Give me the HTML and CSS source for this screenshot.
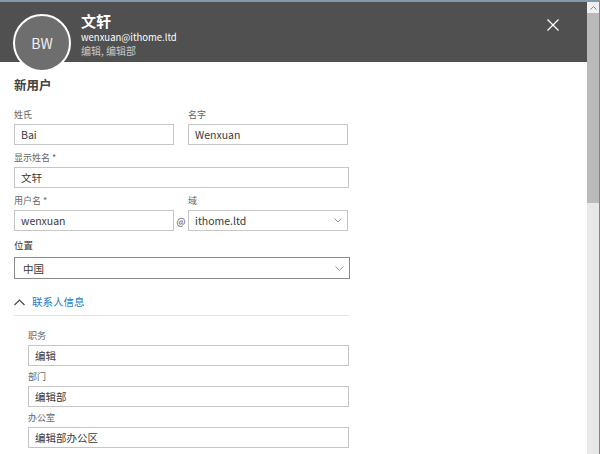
FILE: index.html
```html
<!DOCTYPE html>
<html lang="zh-CN">
<head>
<meta charset="utf-8">
<title>新用户</title>
<link rel="stylesheet" href="styles.css">
</head>
<body>
<div class="topstrip"></div>
<div class="window">
  <div class="panel">
    <header class="header">
      <div class="avatar">BW</div>
      <div class="info">
        <div class="name">文轩</div>
        <div class="email">wenxuan@ithome.ltd</div>
        <div class="sub">编辑, 编辑部</div>
      </div>
      <div class="close">
        <svg width="12" height="12" viewBox="0 0 12 12"><path d="M0.5 0.5 L11.5 11.5 M11.5 0.5 L0.5 11.5" stroke="#fff" stroke-width="1.3" fill="none"/></svg>
      </div>
    </header>
    <main class="content">
      <h2 class="title">新用户</h2>
      <div class="form">
        <div class="row">
          <div class="field half">
            <div class="label">姓氏</div>
            <div class="input">Bai</div>
          </div>
          <div class="spacer"></div>
          <div class="field half">
            <div class="label">名字</div>
            <div class="input">Wenxuan</div>
          </div>
        </div>
        <div class="field">
          <div class="label">显示姓名 *</div>
          <div class="input">文轩</div>
        </div>
        <div class="row">
          <div class="field half">
            <div class="label">用户名 *</div>
            <div class="input">wenxuan</div>
          </div>
          <div class="spacer at">@</div>
          <div class="field half">
            <div class="label">域</div>
            <div class="input select">ithome.ltd
              <svg class="chev" width="8" height="5" viewBox="0 0 8 5"><path d="M0.5 0.5 L4 4 L7.5 0.5" stroke="#888" stroke-width="0.9" fill="none"/></svg>
            </div>
          </div>
        </div>
        <div class="field loc">
          <div class="label dark">位置</div>
          <div class="input select strong">中国
            <svg class="chev" width="9" height="5" viewBox="0 0 9 5"><path d="M0.5 0.5 L4.5 4.5 L8.5 0.5" stroke="#888" stroke-width="0.9" fill="none"/></svg>
          </div>
        </div>
        <div class="section">
          <svg class="up" width="11" height="7" viewBox="0 0 11 7"><path d="M0.5 6 L5.5 1 L10.5 6" stroke="#444" stroke-width="1.1" fill="none"/></svg>
          <span class="section-title">联系人信息</span>
        </div>
        <div class="contact">
          <div class="field">
            <div class="label">职务</div>
            <div class="input">编辑</div>
          </div>
          <div class="field">
            <div class="label">部门</div>
            <div class="input">编辑部</div>
          </div>
          <div class="field">
            <div class="label">办公室</div>
            <div class="input">编辑部办公区</div>
          </div>
        </div>
      </div>
    </main>
  </div>
  <div class="scrollbar">
    <div class="sb-btn"><svg width="7" height="4" viewBox="0 0 7 4"><path d="M0.5 3.5 L3.5 0.5 L6.5 3.5" stroke="#888" stroke-width="1" fill="none"/></svg></div>
    <div class="sb-thumb"></div>
    <div class="sb-track"></div>
  </div>
</div>
</body>
</html>
```
FILE: styles.css
```css
html, body {
  margin: 0;
  padding: 0;
  background: #fff;
  overflow: hidden;
}
body {
  width: 600px;
  height: 454px;
  font-family: "Noto Sans CJK SC", "Noto Sans", sans-serif;
  color: #333;
}
.topstrip {
  height: 2px;
  background: #8497ab;
}
.window {
  display: flex;
  height: 452px;
}
.panel {
  width: 587px;
  display: flex;
  flex-direction: column;
}
.header {
  height: 60px;
  background: #505050;
  display: flex;
  align-items: flex-start;
  padding-left: 13px;
  box-sizing: border-box;
}
.avatar {
  width: 54px;
  height: 54px;
  border: 2px solid #fff;
  border-radius: 50%;
  background: #6e6e6e;
  color: #f0f0f0;
  font-size: 14px;
  line-height: 16px;
  display: flex;
  align-items: center;
  justify-content: center;
  margin-top: 12px;
  flex: none;
}
.info {
  margin-left: 10px;
  margin-top: 9px;
  color: #fff;
  flex: 1;
}
.name {
  font-size: 15px;
  font-weight: 700;
  line-height: 20px;
}
.email {
  font-size: 9.5px;
  line-height: 13px;
}
.sub {
  font-size: 10px;
  line-height: 14px;
  color: #c9c9c9;
}
.close {
  margin-top: 17px;
  margin-right: 28px;
  width: 12px;
  height: 12px;
}
.close svg { display: block; }
.content {
  padding-left: 14px;
  flex: 1;
}
.title {
  margin: 13px 0 0;
  font-size: 12.5px;
  font-weight: 700;
  line-height: 20px;
  color: #444;
}
.form {
  width: 335px;
  margin-top: 13px;
}
.row {
  display: flex;
}
.half {
  width: 160px;
}
.spacer {
  width: 14px;
}
.at {
  font-size: 9.5px;
  color: #444;
  padding-top: 21px;
  text-align: center;
  line-height: 12px;
}
.field {
  margin-bottom: 6px;
}
.label {
  font-size: 9px;
  line-height: 13px;
  color: #666;
  margin-bottom: 3px;
}
.label.dark {
  color: #333;
  font-size: 9.5px;
  line-height: 12px;
  margin-bottom: 6px;
}
.input {
  height: 21px;
  border: 1px solid #c6c6c6;
  box-sizing: border-box;
  font-size: 10.5px;
  line-height: 19px;
  padding-left: 6px;
  color: #3a3a3a;
  display: flex;
  align-items: center;
}
.select {
  justify-content: space-between;
  padding-right: 5px;
}
.strong {
  border-color: #8a8a8a;
  height: 22px;
  padding-left: 8px;
}
.loc {
  margin-top: 2px;
  width: 336px;
}
.chev { display: block; }
.section {
  margin-top: 12px;
  height: 22px;
  border-bottom: 1px solid #e3e3e3;
  display: flex;
  align-items: center;
  padding-bottom: 2px;
}
.up {
  margin-left: 0;
  margin-right: 7px;
}
.section-title {
  font-size: 10.5px;
  line-height: 14px;
  color: #1f7ac4;
}
.contact {
  padding-left: 14px;
  padding-top: 13px;
}
.contact .field {
  margin-bottom: 4px;
}
.scrollbar {
  width: 13px;
  display: flex;
  flex-direction: column;
  border-right: 1px solid #4a8fd8;
  box-sizing: border-box;
}
.sb-btn {
  height: 11px;
  background: #f0f0f0;
  display: flex;
  align-items: center;
  justify-content: center;
}
.sb-btn svg { display: block; }
.sb-thumb {
  height: 190px;
  background: #bababa;
}
.sb-track {
  flex: 1;
  background: #e8e8e8;
}
```
